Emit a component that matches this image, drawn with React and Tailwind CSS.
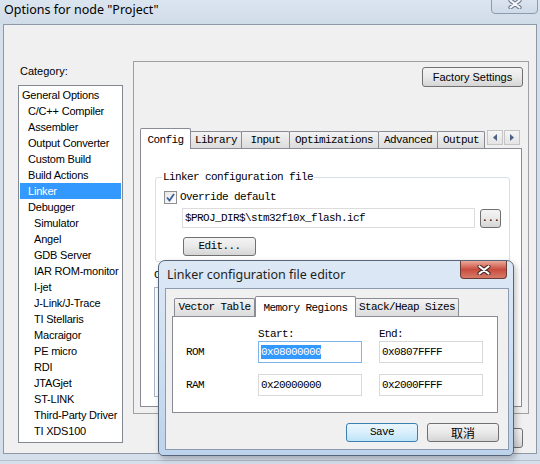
import React from 'react';

const sans = "font-['Liberation_Sans',Arial,sans-serif] text-[11px]";
const mono = "font-['Liberation_Mono','Courier_New',monospace] text-[11px] tracking-[-0.6px]";

const categories = [
  ['General Options', 0],
  ['C/C++ Compiler', 1],
  ['Assembler', 1],
  ['Output Converter', 1],
  ['Custom Build', 1],
  ['Build Actions', 1],
  ['Linker', 1],
  ['Debugger', 1],
  ['Simulator', 2],
  ['Angel', 2],
  ['GDB Server', 2],
  ['IAR ROM-monitor', 2],
  ['I-jet', 2],
  ['J-Link/J-Trace', 2],
  ['TI Stellaris', 2],
  ['Macraigor', 2],
  ['PE micro', 2],
  ['RDI', 2],
  ['JTAGjet', 2],
  ['ST-LINK', 2],
  ['Third-Party Driver', 2],
  ['TI XDS100', 2],
];
const indent = ['pl-[2px]', 'pl-[8px]', 'pl-[14px]'];

const linkerTabs = [
  { label: 'Config', w: 'w-[51px]', active: true },
  { label: 'Library', w: 'w-[52px]' },
  { label: 'Input', w: 'w-[49px]' },
  { label: 'Optimizations', w: 'w-[90px]' },
  { label: 'Advanced', w: 'w-[60px]' },
  { label: 'Output', w: 'w-[48px]' },
];

const editorTabs = [
  { label: 'Vector Table', w: 'w-[81px]' },
  { label: 'Memory Regions', w: 'w-[101px]', active: true },
  { label: 'Stack/Heap Sizes', w: 'w-[104px]' },
];

function WinButton({ className = '', focused, children }) {
  return (
    <div
      className={`flex items-center justify-center rounded-[3px] border ${
        focused
          ? 'border-[#3c7fb1] bg-linear-to-b from-[#eaf6fd] via-[#d9effc] to-[#bde4f8]'
          : 'border-[#707070] bg-linear-to-b from-[#f4f4f4] via-[#e9e9e9] to-[#d5d5d5]'
      } ${className}`}
    >
      {children}
    </div>
  );
}

function Tab({ label, w, active, short }) {
  if (active) {
    return (
      <div
        className={`relative z-10 -mb-px flex h-[21px] ${w} items-start justify-center rounded-t-[2px] border border-b-0 border-[#898c95] bg-white pt-[3px]`}
      >
        {label}
      </div>
    );
  }
  return (
    <div
      className={`-ml-px flex ${short ? 'h-[18px]' : 'h-[17px]'} ${w} items-center justify-center rounded-t-[2px] border border-b-0 border-[#898c95] bg-linear-to-b from-[#f3f3f3] to-[#dcdcdc] first:ml-0`}
    >
      {label}
    </div>
  );
}

function Field({ value, selected, focused }) {
  return (
    <div
      className={`flex h-[22px] w-[104px] items-center border bg-white pl-[2px] ${
        focused ? 'border-[#7eb4ea]' : 'border-[#d9d9d9]'
      }`}
    >
      <span className={selected ? 'bg-[#3399ff] leading-[14px] text-white' : 'leading-[14px]'}>{value}</span>
    </div>
  );
}

function CloseGlyph({ fill, edge }) {
  return (
    <svg width="14" height="10" viewBox="0 0 14 10">
      <path d="M2.5 1.5 L11.5 8.5 M11.5 1.5 L2.5 8.5" stroke={edge} strokeWidth="4.2" strokeLinecap="round" />
      <path d="M2.5 1.5 L11.5 8.5 M11.5 1.5 L2.5 8.5" stroke={fill} strokeWidth="2.2" strokeLinecap="round" />
    </svg>
  );
}

function LinkerEditor() {
  return (
    <div className="absolute left-[158px] top-[260px] flex h-[196px] w-[356px] flex-col rounded-t-[7px] rounded-b-[5px] border border-[#56657a] bg-linear-to-b from-[#dde8f5] via-[#cddff2] to-[#bdd3ec] shadow-[2px_3px_6px_rgba(0,0,0,0.25)]">
      <div className="flex h-[27px] items-start justify-between">
        <span className="ml-[8px] mt-[6px] font-['Noto_Sans',sans-serif] text-[12.5px] leading-[16px] text-[#1e1e1e]">
          Linker configuration file editor
        </span>
        <div className="mr-[6px] flex h-[18px] w-[47px] items-center justify-center rounded-b-[4px] border border-t-0 border-[#6b3b36] bg-linear-to-b from-[#e9a99b] via-[#c94c3f] to-[#d67a68]">
          <CloseGlyph fill="#ffffff" edge="#4a2a26" />
        </div>
      </div>
      <div className={`ml-[6px] flex h-[162px] w-[344px] flex-col border border-[#8a9bb2] bg-[#f0f0f0] ${mono} text-black`}>
        <div className="ml-[8px] mt-[7px] flex items-end">
          {editorTabs.map((t) => (
            <Tab key={t.label} {...t} short />
          ))}
        </div>
        <div className="ml-[6px] h-[97px] w-[326px] border border-[#898c95] bg-white">
          <div className="ml-[85px] mt-[10px] flex h-[14px] items-center">
            <span className="w-[121px]">Start:</span>
            <span>End:</span>
          </div>
          <div className="ml-[13px] flex items-center">
            <span className="w-[72px]">ROM</span>
            <Field value="0x08000000" selected focused />
            <div className="w-[17px]" />
            <Field value="0x0807FFFF" />
          </div>
          <div className="ml-[13px] mt-[11px] flex items-center">
            <span className="w-[72px]">RAM</span>
            <Field value="0x20000000" />
            <div className="w-[17px]" />
            <Field value="0x2000FFFF" />
          </div>
        </div>
        <div className="mt-[10px] flex justify-end gap-[9px] pr-[9px]">
          <WinButton focused className="h-[19px] w-[72px]">
            Save
          </WinButton>
          <WinButton className="h-[19px] w-[72px] font-['Noto_Sans_CJK_SC',sans-serif] text-[12px] tracking-normal">
            取消
          </WinButton>
        </div>
      </div>
    </div>
  );
}

export default function App() {
  return (
    <div className="relative h-[464px] w-[540px] overflow-hidden bg-[#d5dfeb]">
      {/* title bar */}
      <div className="flex h-[24px] items-start justify-between bg-linear-to-b from-[#dbe5f0] to-[#d1dce9]">
        <span className="ml-[4px] mt-[2px] font-['Noto_Sans',sans-serif] text-[12.5px] leading-[16px] text-black">
          Options for node "Project"
        </span>
        <div className="-mt-[6px] mr-[2px] flex h-[20px] w-[47px] items-end justify-center rounded-b-[4px] border border-[#8d9bae] bg-linear-to-b from-[#dfe7f1] to-[#cfdae8] pb-[4px]">
          <CloseGlyph fill="#f4f6f9" edge="#6c7a8c" />
        </div>
      </div>

      {/* client area */}
      <div className={`mx-[3px] flex h-[430px] items-start border border-[#8e99a7] bg-[#f0f0f0] ${sans} text-black`}>
        {/* category list */}
        <div className="ml-[14px] mt-[38px] flex flex-col">
          <div className="h-[22px] pl-[2px] leading-[16px]">Category:</div>
          <div className="h-[358px] w-[105px] overflow-hidden border border-[#828790] bg-white pt-px">
            {categories.map(([name, level]) => (
              <div
                key={name}
                className={`mx-px h-[16px] whitespace-nowrap leading-[16px] tracking-[-0.2px] ${indent[level]} ${
                  name === 'Linker' ? 'bg-[#3399ff] text-white' : ''
                }`}
              >
                {name}
              </div>
            ))}
          </div>
        </div>

        {/* options page */}
        <div className="ml-[10px] mt-[36px] flex flex-col">
          <div className="flex h-[353px] w-[396px] flex-col border border-[#a0a0a0]">
            <WinButton className="mr-[5px] mt-[5px] h-[20px] w-[101px] self-end">Factory Settings</WinButton>

            <div className={`ml-[6px] mt-[41px] flex items-end ${mono}`}>
              {linkerTabs.map((t) => (
                <Tab key={t.label} {...t} />
              ))}
              <div className="mb-[3px] ml-[2px] flex gap-px">
                <div className="flex h-[15px] w-[16px] items-center justify-center border border-[#c5c5c5] bg-linear-to-b from-[#f6f6f6] to-[#e4e4e4]">
                  <svg width="4" height="7" viewBox="0 0 4 7">
                    <path d="M4 0 L0 3.5 L4 7 Z" fill="#4d6185" />
                  </svg>
                </div>
                <div className="flex h-[15px] w-[16px] items-center justify-center border border-[#c5c5c5] bg-linear-to-b from-[#f6f6f6] to-[#e4e4e4]">
                  <svg width="4" height="7" viewBox="0 0 4 7">
                    <path d="M0 0 L4 3.5 L0 7 Z" fill="#4d6185" />
                  </svg>
                </div>
              </div>
            </div>

            <div className={`ml-[6px] h-[259px] w-[382px] border border-[#898c95] bg-white ${mono}`}>
              <fieldset className="ml-[14px] mt-[22px] w-[355px] rounded-[3px] border border-[#d5dfe5] pb-[5px]">
                <legend className="ml-[6px] px-px leading-[12px]">Linker configuration file</legend>
                <div className="ml-[8px] mt-[7px] flex h-[14px] items-center gap-[3px]">
                  <div className="flex h-[13px] w-[13px] items-center justify-center border border-[#8f8f8f] bg-linear-to-br from-[#e6e6e6] to-[#ffffff]">
                    <svg width="9" height="9" viewBox="0 0 9 9">
                      <path d="M1 4.5 L3.5 7.5 L8 1" fill="none" stroke="#3a5f9e" strokeWidth="1.8" />
                    </svg>
                  </div>
                  <span>Override default</span>
                </div>
                <div className="ml-[26px] mt-[4px] flex items-center gap-[5px]">
                  <div className="flex h-[20px] w-[293px] items-center border border-[#dcdcdc] pl-[2px]">
                    $PROJ_DIR$\stm32f10x_flash.icf
                  </div>
                  <WinButton className="h-[19px] w-[21px]">...</WinButton>
                </div>
                <WinButton className="ml-[27px] mt-[9px] h-[19px] w-[73px]">Edit...</WinButton>
              </fieldset>
              <div className="ml-[13px] mt-[7px] leading-[12px]">Configuration file symbol definitions:</div>
              <div className="ml-[13px] mt-[6px] h-[110px] w-[356px] border border-[#abb6c4] bg-white" />
            </div>
          </div>

          <div className="mt-[14px] flex justify-end gap-[8px] pr-[6px]">
            <WinButton className="h-[20px] w-[75px]">OK</WinButton>
            <WinButton className="h-[20px] w-[75px]">Cancel</WinButton>
          </div>
        </div>
      </div>

      {/* bottom frame edge */}
      <div className="mt-[6px] h-px bg-[#b4c0cf]" />

      <LinkerEditor />
    </div>
  );
}
